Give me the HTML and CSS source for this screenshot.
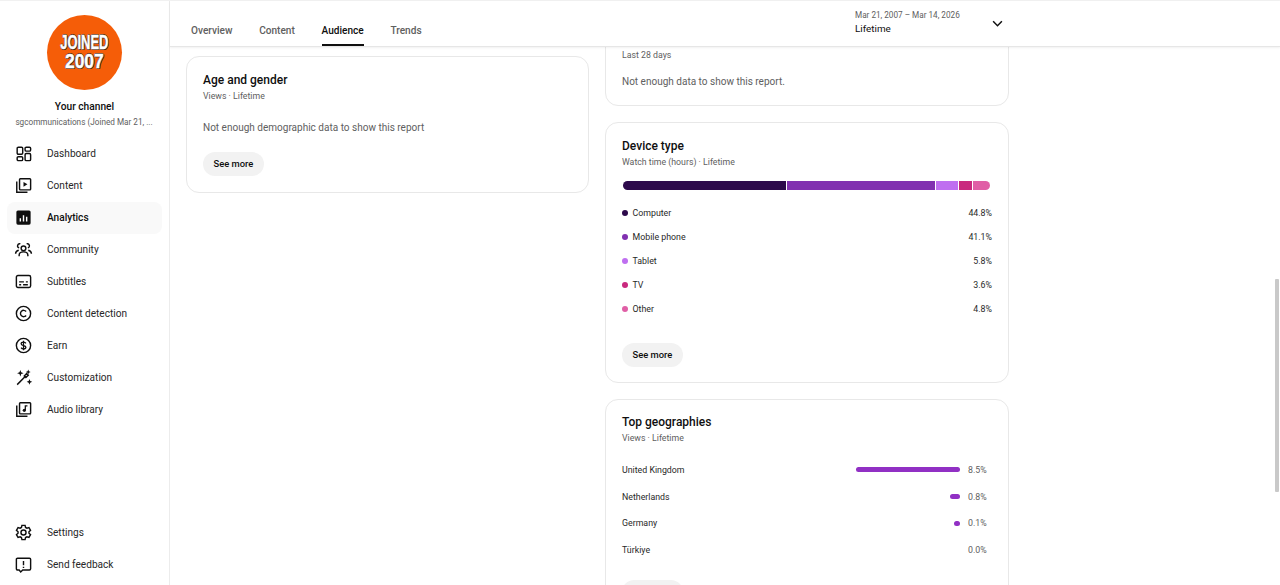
FILE: index.html
```html
<!DOCTYPE html>
<html lang="en">
<head>
<meta charset="utf-8">
<title>Channel analytics</title>
<link rel="stylesheet" href="styles.css">
</head>
<body>
<div class="app">
  <aside class="sidebar">
    <div class="channel">
      <div class="avatar"><span class="joined">JOINED</span><span class="year">2007</span></div>
      <div class="channel-title">Your channel</div>
      <div class="channel-name">sgcommunications (Joined Mar 21, ...</div>
    </div>
    <nav class="nav">
      <a class="nav-item"><svg class="icon" viewBox="0 0 24 24"><rect x="4" y="4" width="7" height="9" rx="1.5"/><rect x="14" y="4" width="7" height="5" rx="1.5"/><rect x="4" y="16" width="7" height="5" rx="1.5"/><rect x="14" y="12" width="7" height="9" rx="1.5"/></svg><span>Dashboard</span></a>
      <a class="nav-item"><svg class="icon" viewBox="0 0 24 24"><rect x="7" y="3.500" width="14" height="14" rx="1"/><path d="M3.500 7v13.500H17"/><path class="fill" d="M12 7.500v6l5-3z"/></svg><span>Content</span></a>
      <a class="nav-item active"><svg class="icon" viewBox="0 0 24 24"><rect class="fill" x="3" y="3" width="18" height="18" rx="2"/><path class="white" d="M8 17v-4M12 17V9M16 17v-6"/></svg><span>Analytics</span></a>
      <a class="nav-item"><svg class="icon" viewBox="0 0 24 24"><circle cx="12" cy="10.500" r="3"/><path d="M6.500 20.500v-1.500c0-2.500 2.500-4 5.500-4s5.500 1.500 5.500 4v1.500"/><path d="M8 4.800a2.700 2.700 0 1 0-1.500 5.200M16 4.800a2.700 2.700 0 1 1 1.500 5.200M2 17.500c0-2.500 1.500-4 4-4.500M22 17.500c0-2.500-1.500-4-4-4.500"/></svg><span>Community</span></a>
      <a class="nav-item"><svg class="icon" viewBox="0 0 24 24"><rect x="3" y="4.500" width="18" height="15" rx="2"/><path d="M6.500 12.500h6M15 12.500h2.500M6.500 16h2.500M11.500 16h6"/></svg><span>Subtitles</span></a>
      <a class="nav-item"><svg class="icon" viewBox="0 0 24 24"><circle cx="12" cy="12" r="9"/><path d="M15.300 9.500a4 4 0 1 0 0 5"/></svg><span>Content detection</span></a>
      <a class="nav-item"><svg class="icon" viewBox="0 0 24 24"><circle cx="12" cy="12" r="9"/><path class="thin" d="M15 9.300c-.5-1-1.600-1.500-3-1.500-1.700 0-3 .8-3 2.100 0 3 6 1.400 6 4.200 0 1.300-1.300 2.100-3 2.100-1.400 0-2.500-.5-3-1.500M12 6v12"/></svg><span>Earn</span></a>
      <a class="nav-item"><svg class="icon" viewBox="0 0 24 24"><path d="M4 21l10.500-10.500"/><path d="M13 10l3-3 2 2-3 3z"/><path class="fill" d="M8 2.500l1.100 3 3 1.100-3 1.100-1.100 3-1.100-3-3-1.100 3-1.100zM18 2l.9 2.100 2.100.9-2.100.9-.9 2.100-.9-2.100-2.100-.9 2.100-.9zM19.500 14l1 2.500 2.500 1-2.500 1-1 2.500-1-2.500-2.500-1 2.500-1z"/></svg><span>Customization</span></a>
      <a class="nav-item"><svg class="icon" viewBox="0 0 24 24"><rect x="7" y="3.500" width="14" height="14" rx="1"/><path d="M3.500 7v13.500H17"/><circle class="fill" cx="13" cy="13" r="2"/><path class="thin" d="M14.300 13V7.500H17"/></svg><span>Audio library</span></a>
    </nav>
    <nav class="nav nav-bottom">
      <a class="nav-item"><svg class="icon" viewBox="0 0 24 24"><circle cx="12" cy="12" r="3.200"/><path d="M10 3h4l.6 2.600 1.700 1 2.600-.8 2 3.400-2 1.800v2l2 1.800-2 3.400-2.600-.8-1.700 1-.6 2.600h-4l-.6-2.600-1.700-1-2.600.8-2-3.400 2-1.800v-2l-2-1.800 2-3.400 2.600.8 1.700-1z"/></svg><span>Settings</span></a>
      <a class="nav-item"><svg class="icon" viewBox="0 0 24 24"><path d="M4.500 4h15A1.500 1.500 0 0 1 21 5.500v12a1.500 1.500 0 0 1-1.500 1.500H11l-2.500 2.500L6.500 19h-2A1.500 1.500 0 0 1 3 17.500v-12A1.500 1.500 0 0 1 4.500 4z"/><path d="M12 7.500v5.500M12 14.800v1.700"/></svg><span>Send feedback</span></a>
    </nav>
  </aside>

  <main class="main">
    <header class="topbar">
      <div class="tabs">
        <a class="tab">Overview</a>
        <a class="tab">Content</a>
        <a class="tab tab-active">Audience</a>
        <a class="tab">Trends</a>
      </div>
      <div class="range">
        <div class="range-text">
          <div class="range-dates">Mar 21, 2007 – Mar 14, 2026</div>
          <div class="range-label">Lifetime</div>
        </div>
        <svg class="chevron" viewBox="0 0 24 24"><path d="M5 8.500l7 7 7-7"/></svg>
      </div>
    </header>

    <div class="scroller">
      <div class="col col-left">
        <section class="card">
          <h2 class="card-title">Age and gender</h2>
          <div class="card-sub">Views · Lifetime</div>
          <p class="card-msg">Not enough demographic data to show this report</p>
          <button class="more">See more</button>
        </section>
      </div>

      <div class="col col-right">
        <section class="card card-clipped">
          <div class="card-sub">Last 28 days</div>
          <p class="card-msg">Not enough data to show this report.</p>
        </section>

        <section class="card card-device">
          <h2 class="card-title">Device type</h2>
          <div class="card-sub">Watch time (hours) · Lifetime</div>
          <div class="stack">
            <i class="seg c1 s1"></i><i class="seg c2 s2"></i><i class="seg c3 s3"></i><i class="seg c4 s4"></i><i class="seg c5 s5"></i>
          </div>
          <ul class="legend">
            <li><i class="dot c1"></i><span>Computer</span><b>44.8%</b></li>
            <li><i class="dot c2"></i><span>Mobile phone</span><b>41.1%</b></li>
            <li><i class="dot c3"></i><span>Tablet</span><b>5.8%</b></li>
            <li><i class="dot c4"></i><span>TV</span><b>3.6%</b></li>
            <li><i class="dot c5"></i><span>Other</span><b>4.8%</b></li>
          </ul>
          <button class="more more-device">See more</button>
        </section>

        <section class="card card-geo">
          <h2 class="card-title">Top geographies</h2>
          <div class="card-sub">Views · Lifetime</div>
          <ul class="geo">
            <li><span>United Kingdom</span><div class="track"><i class="fillbar" style="width:104px"></i></div><b>8.5%</b></li>
            <li><span>Netherlands</span><div class="track"><i class="fillbar" style="width:10px"></i></div><b>0.8%</b></li>
            <li><span>Germany</span><div class="track"><i class="fillbar" style="width:6px"></i></div><b>0.1%</b></li>
            <li><span>Türkiye</span><div class="track"></div><b>0.0%</b></li>
          </ul>
          <div class="more more-geo"></div>
        </section>
      </div>
    </div>
  </main>
</div>
<div class="scrollbar"></div>
</body>
</html>
```
FILE: styles.css
```css
* { box-sizing: border-box; }
html, body { margin: 0; height: 100%; overflow: hidden; background: #fff; }
body { font-family: Roboto, "Liberation Sans", sans-serif; color: #0f0f0f; }
ul { list-style: none; margin: 0; padding: 0; }
p, h2 { margin: 0; }

.app { display: flex; height: 585px; border-top: 1px solid #f1f1f1; }

.sidebar { width: 170px; flex: none; display: flex; flex-direction: column; border-right: 1px solid #ececec; padding-bottom: 5px; }
.channel { display: flex; flex-direction: column; align-items: center; padding-top: 13.500px; }
.avatar { width: 75px; height: 75px; border-radius: 50%; background: #f55d08; display: flex; flex-direction: column; align-items: center; justify-content: center; font-family: "Liberation Sans", sans-serif; font-weight: 700; color: #fff; -webkit-text-stroke: .5px #fff; text-shadow: -1px 0 #4a2a1a, 1px 0 #4a2a1a, 0 1px #4a2a1a, 0 -1px #4a2a1a, 1px 1px #4a2a1a; margin-left: -1px; }
.joined { font-size: 19.500px; line-height: 18px; transform: scaleX(.66); }
.year { font-size: 21px; line-height: 20px; transform: scaleX(.83); }
.channel-title { font-size: 10.200px; font-weight: 500; line-height: 14px; margin-top: 10.500px; color: #0f0f0f; }
.channel-name { font-size: 8.200px; line-height: 12px; color: #606060; margin-top: 1.500px; margin-left: -1px; white-space: nowrap; }

.nav { display: flex; flex-direction: column; }
.nav:not(.nav-bottom) { margin-top: 10px; }
.nav-bottom { margin-top: auto; }
.nav-item { height: 32px; width: 155px; margin-left: 7px; padding-left: 7px; display: flex; align-items: center; gap: 14px; font-size: 10.100px; color: #282828; border-radius: 8px; }
.nav-item.active { background: #f9f9f9; color: #0f0f0f; font-weight: 500; }

.icon { width: 19px; height: 19px; flex: none; fill: none; stroke: #0f0f0f; stroke-width: 1.800; }
.icon .fill { fill: #0f0f0f; stroke: none; }
.icon .white { stroke: #fff; stroke-width: 1.800; }
.icon .thin { stroke-width: 1.600; }

.main { flex: 1; min-width: 0; display: flex; flex-direction: column; }
.topbar { height: 46px; flex: none; display: flex; justify-content: space-between; border-bottom: 1px solid #e6e6e6; box-shadow: 0 1px 2px rgba(0,0,0,.06); padding-left: 21px; position: relative; z-index: 1; background: #fff; }
.tabs { display: flex; gap: 26.700px; }
.tab { height: 45px; display: flex; align-items: center; padding-top: 15px; font-size: 10.100px; font-weight: 500; color: #606060; border-bottom: 2px solid transparent; }
.tab-active { color: #0f0f0f; border-bottom-color: #0f0f0f; }

.range { display: flex; align-items: center; gap: 30px; margin-right: 275px; padding-bottom: 3px; }
.range-text { width: 105px; flex: none; }
.range-dates { font-size: 8.200px; line-height: 12px; color: #606060; white-space: nowrap; }
.range-label { font-size: 9.900px; line-height: 14px; margin-top: 1px; color: #0f0f0f; }
.chevron { width: 15px; height: 15px; flex: none; fill: none; stroke: #0f0f0f; stroke-width: 2.400; margin-top: 3px; }

.scroller { flex: 1; min-height: 0; overflow: hidden; display: flex; align-items: flex-start; gap: 16px; padding-left: 16px; }
.col { width: 403px; flex: none; display: flex; flex-direction: column; gap: 16px; }
.col-left { margin-top: 9px; }
.col-right { margin-top: -17px; width: 404px; }

.card { border: 1px solid #e8e8e8; border-radius: 13px; padding: 15px 16px 16px; background: #fff; }
.card-clipped { padding-top: 16px; }
.card-clipped .card-msg { margin-top: 14px; }
.card-device { padding-bottom: 15px; }
.card-geo { padding-top: 14px; }
.card-title { font-size: 12px; line-height: 16px; font-weight: 500; color: #0f0f0f; }
.card-sub { font-size: 8.750px; line-height: 12px; color: #606060; margin-top: 2px; }
.card-msg { font-size: 10.020px; line-height: 14px; color: #606060; margin-top: 19px; }

.more { display: block; height: 24px; border: 0; border-radius: 12px; background: #f2f2f2; padding: 0 10.500px 1px; font: 500 9.400px Roboto, sans-serif; color: #0f0f0f; margin-top: 17px; }

.stack { display: flex; gap: 1px; height: 9px; margin: 12.500px 2px 0 1px; border-radius: 4.500px; overflow: hidden; }
.seg { display: block; height: 100%; }
.s1 { flex: 162.500; } .s2 { flex: 148; } .s3 { flex: 21.500; } .s4 { flex: 13; } .s5 { flex: 17; }
.c1 { background: #2d0a4b; } .c2 { background: #8131b0; } .c3 { background: #bf6ff0; } .c4 { background: #c9297e; } .c5 { background: #e05fa6; }

.legend { margin-top: 11.500px; }
.legend li { height: 24px; display: flex; align-items: center; font-size: 8.800px; color: #282828; }
.legend span { flex: 1; }
.legend b { font-weight: 400; }
.dot { width: 6px; height: 6px; border-radius: 50%; margin-right: 4.500px; display: block; }
.more-device { margin-top: 22px; }

.geo { margin-top: 12.500px; margin-right: 1px; }
.geo li { height: 26.700px; display: flex; align-items: center; font-size: 8.800px; color: #282828; }
.geo span { flex: 1; }
.track { width: 110px; display: flex; justify-content: flex-end; }
.fillbar { display: block; height: 5px; border-radius: 3px; background: #9130c4; }
.geo b { font-weight: 400; width: 31px; padding-left: 8px; color: #606060; }
.more-geo { margin-top: 17px; width: 61px; }

.scrollbar { position: absolute; left: 1275px; top: 279px; width: 4px; height: 213px; background: #c9c9c9; border-radius: 1px; }
```
